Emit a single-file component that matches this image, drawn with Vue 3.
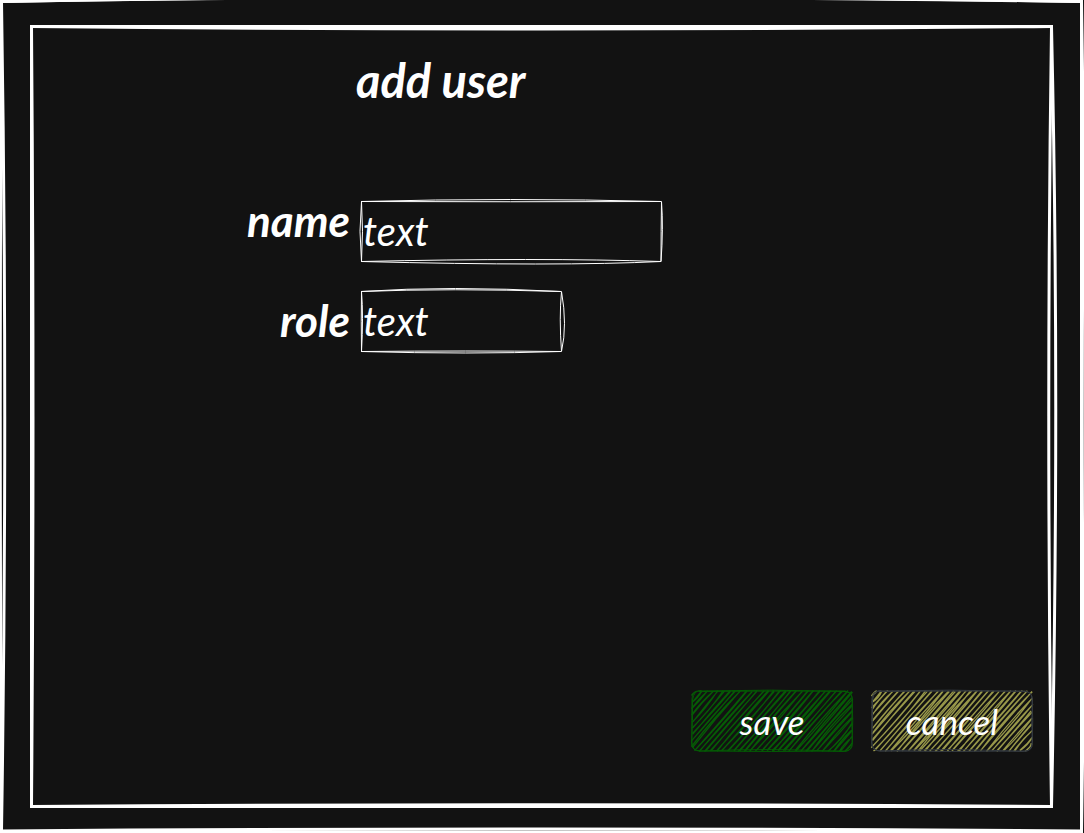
<script setup>
import { ref } from 'vue'

const name = ref('text')
const role = ref('text')

// Hand-drawn hachure: pairs of slightly uneven diagonal strokes.
function hachure(width, height, seed) {
  let state = seed
  const jitter = (amount) => {
    state = (state * 16807) % 2147483647
    return (state / 2147483647 - 0.5) * 2 * amount
  }
  const slope = 1.15
  const parts = []
  for (let c = 4; c < width + height / slope - 3; c += 5.6) {
    const x1 = Math.max(0, c - height / slope)
    const y1 = Math.min(height, c * slope)
    const x2 = Math.min(width, c)
    const y2 = Math.max(0, (c - width) * slope)
    for (let pass = 0; pass < 2; pass++) {
      const mx = (x1 + x2) / 2 + jitter(2.6)
      const my = (y1 + y2) / 2 + jitter(2.6)
      const ax = x1 + jitter(0.9)
      const ay = y1 + jitter(0.6)
      const bx = x2 + jitter(0.9)
      const by = y2 + jitter(0.6)
      parts.push(
        `M${ax.toFixed(1)} ${ay.toFixed(1)}Q${mx.toFixed(1)} ${my.toFixed(1)} ${bx.toFixed(1)} ${by.toFixed(1)}`
      )
    }
  }
  return parts.join('')
}

const actions = [
  { label: 'save', kind: 'save', lines: hachure(160, 60, 4711) },
  { label: 'cancel', kind: 'cancel', lines: hachure(160, 60, 90210) }
]
</script>

<template>
  <main class="page">
    <svg class="sketch" viewBox="0 0 1084 833" preserveAspectRatio="none" aria-hidden="true">
      <g class="thick">
        <path d="M0 1.5H3M1.5 1.5Q520 -8 1081.5 1.5" />
        <path d="M1.5 1.5Q480 -7 1081.5 1.5" />
        <path d="M1.5 0V3M1.5 1.5Q8 416 1.5 831" />
        <path d="M1.5 1.5Q-1 416 1.5 831" />
        <path d="M1081.5 0V833" />
        <path d="M1081.5 1.5Q1088 416 1081.5 831.5" />
        <path d="M1.5 831Q542 827 1081.5 831" />
        <path d="M0 832H1083" />
        <path d="M30 26.5H1053M31.5 26.5Q542 31.5 1051.5 26.5" />
        <path d="M31.5 25V808M31.5 26.5Q34.5 416 31.5 806.5" />
        <path d="M1051.5 26.5Q1046 416 1051.5 806.5" />
        <path d="M1051.5 26.5Q1060 400 1051.5 806.5" />
        <path d="M30 806.5H1053M31.5 806.5Q542 803 1051.5 806.5" />
      </g>
    </svg>

    <form class="form" @submit.prevent>
      <h1 class="title">add user</h1>

      <div class="body">
        <div class="labels">
          <label for="name">name</label>
          <label for="role">role</label>
        </div>
        <div class="fields">
          <div class="field wide">
            <svg class="sketch" viewBox="0 0 302 62" preserveAspectRatio="none" aria-hidden="true">
              <path d="M1 1.5Q150 -2.5 301 1.5M1 1.5Q150 2 301 1.5" />
              <path d="M301.5 1.5Q303.5 28 301 61.5M301.5 1.5Q301 32 301 61.5" />
              <path d="M301 61.5Q200 66.5 1 61.5M301 61.5Q180 57.5 1 61.5" />
              <path d="M1.5 61.5Q-1.5 31 1.5 1.5M1.5 61.5Q3.5 31 1.5 1.5" />
            </svg>
            <input id="name" v-model="name" type="text" autocomplete="off" />
          </div>
          <div class="field">
            <svg class="sketch" viewBox="0 0 202 62" preserveAspectRatio="none" aria-hidden="true">
              <path d="M1 1.5Q90 -4.5 201 1.5M1 1.5Q90 -2 201 1.5" />
              <path d="M201.5 1.5Q207.5 35 201.5 61.5M201.5 1.5Q199 28 201.5 61.5" />
              <path d="M201 61.5Q110 64.5 1 61.5M201 61.5Q110 60.5 1 61.5" />
              <path d="M1.5 61.5Q1 31 1.5 1.5M1.5 61.5Q3.5 26 1.5 1.5" />
            </svg>
            <input id="role" v-model="role" type="text" autocomplete="off" />
          </div>
        </div>
      </div>

      <div class="actions">
        <button v-for="action in actions" :key="action.kind" type="button" :class="action.kind">
          <svg class="sketch" viewBox="0 0 162 62" preserveAspectRatio="none" aria-hidden="true">
            <path class="hatch" transform="translate(1 1)" :d="action.lines" />
            <path d="M9 1Q80 -1 153 1.5Q161 1 161 9Q162.5 30 161 53Q162 61 153 61Q80 62 9 61Q1 61 1 53Q0.5 30 1 9Q1 1 9 1Z" />
            <path d="M8 1.5Q70 1 154 1Q161.5 3 161.5 10Q160 32 161.5 52Q161 62 152 61.5Q80 58 10 61Q0 61 0.5 52Q2 30 1.5 10Q3 0 10 0.5" />
          </svg>
          <span>{{ action.label }}</span>
        </button>
      </div>
    </form>
  </main>
</template>

<style>
body {
  background: #121212;
}
</style>

<style scoped>
.page {
  position: relative;
  box-sizing: border-box;
  min-height: 100vh;
  padding: 52px 51px 81px;
  display: flex;
  overflow: hidden;
  background: #121212;
  color: #fff;
  font-family: Lato, "Open Sans", sans-serif;
}

.sketch {
  position: absolute;
  inset: 0;
  width: 100%;
  height: 100%;
  overflow: visible;
  fill: none;
  stroke: #fff;
  stroke-width: 1;
  pointer-events: none;
}

.sketch path {
  vector-effect: non-scaling-stroke;
}

.thick {
  stroke-width: 3;
}

.form {
  position: relative;
  flex: 1;
  display: flex;
  flex-direction: column;
}

.title {
  margin: 0 0 84px 305px;
  font-size: 47px;
  line-height: 56px;
  font-style: italic;
  font-weight: 700;
}

.body {
  display: flex;
  gap: 10px;
}

.labels {
  width: 299px;
  display: flex;
  flex-direction: column;
  gap: 44px;
  text-align: right;
  font-size: 44px;
  line-height: 56px;
  font-style: italic;
  font-weight: 700;
}

.fields {
  display: flex;
  flex-direction: column;
  gap: 28px;
  padding-top: 8px;
}

.field {
  position: relative;
  width: 202px;
  height: 62px;
}

.field.wide {
  width: 302px;
}

input {
  box-sizing: border-box;
  width: 100%;
  height: 100%;
  padding: 0 3px;
  border: 0;
  outline: none;
  background: transparent;
  color: inherit;
  font: italic 400 40px/60px Lato, "Open Sans", sans-serif;
}

.actions {
  display: flex;
  justify-content: flex-end;
  gap: 18px;
  margin-top: auto;
}

button {
  position: relative;
  width: 162px;
  height: 62px;
  padding: 0;
  border: 0;
  background: transparent;
  color: inherit;
  font: italic 400 35px/60px Lato, "Open Sans", sans-serif;
  cursor: pointer;
}

button span {
  position: relative;
}

.save .sketch {
  stroke: #045a04;
}

.cancel .sketch {
  stroke: #343a40;
}

.sketch .hatch {
  stroke-width: 1.3;
}

.save .hatch {
  stroke: #065c06;
}

.cancel .hatch {
  stroke: #98984a;
}
</style>
